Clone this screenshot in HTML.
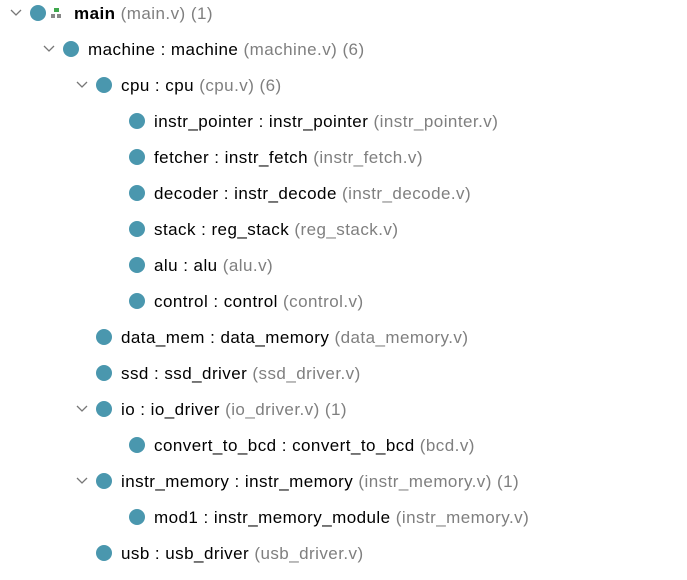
<!DOCTYPE html><html><head><style>
body{margin:0;width:687px;height:580px;background:#fff;font-family:"Liberation Sans",sans-serif;font-size:17px;letter-spacing:0.45px;color:#000;position:relative;overflow:hidden}
.r{position:absolute;height:20px;line-height:20px;white-space:nowrap;margin-top:1px}
.c{position:absolute;width:16px;height:16px;border-radius:50%;background:#4a97ae}
.g{color:#7f7f7f}
svg.ch{position:absolute}
</style></head><body>
<svg class="ch" style="left:10px;top:8px" width="12" height="10"><path d="M1 2 L6 7 L11 2" fill="none" stroke="#777" stroke-width="1.3"/></svg>
<div class="c" style="left:30px;top:5px"></div>
<div style="position:absolute;left:54px;top:8px;width:5px;height:4px;background:#3fa84d"></div>
<div style="position:absolute;left:51px;top:14px;width:4px;height:4px;background:#888"></div>
<div style="position:absolute;left:57px;top:14px;width:4px;height:4px;background:#888"></div>
<div class="r" style="left:74px;top:3px"><b>main</b> <span class="g">(main.v) (1)</span></div>

<svg class="ch" style="left:43px;top:44px" width="12" height="10"><path d="M1 2 L6 7 L11 2" fill="none" stroke="#777" stroke-width="1.3"/></svg>
<div class="c" style="left:63px;top:41px"></div>
<div class="r" style="left:88px;top:39px">machine : machine <span class="g">(machine.v) (6)</span></div>

<svg class="ch" style="left:76px;top:80px" width="12" height="10"><path d="M1 2 L6 7 L11 2" fill="none" stroke="#777" stroke-width="1.3"/></svg>
<div class="c" style="left:96px;top:77px"></div>
<div class="r" style="left:121px;top:75px">cpu : cpu <span class="g">(cpu.v) (6)</span></div>

<div class="c" style="left:129px;top:113px"></div>
<div class="r" style="left:154px;top:111px">instr_pointer : instr_pointer <span class="g">(instr_pointer.v)</span></div>
<div class="c" style="left:129px;top:149px"></div>
<div class="r" style="left:154px;top:147px">fetcher : instr_fetch <span class="g">(instr_fetch.v)</span></div>
<div class="c" style="left:129px;top:185px"></div>
<div class="r" style="left:154px;top:183px">decoder : instr_decode <span class="g">(instr_decode.v)</span></div>
<div class="c" style="left:129px;top:221px"></div>
<div class="r" style="left:154px;top:219px">stack : reg_stack <span class="g">(reg_stack.v)</span></div>
<div class="c" style="left:129px;top:257px"></div>
<div class="r" style="left:154px;top:255px">alu : alu <span class="g">(alu.v)</span></div>
<div class="c" style="left:129px;top:293px"></div>
<div class="r" style="left:154px;top:291px">control : control <span class="g">(control.v)</span></div>

<div class="c" style="left:96px;top:329px"></div>
<div class="r" style="left:121px;top:327px">data_mem : data_memory <span class="g">(data_memory.v)</span></div>
<div class="c" style="left:96px;top:365px"></div>
<div class="r" style="left:121px;top:363px">ssd : ssd_driver <span class="g">(ssd_driver.v)</span></div>

<svg class="ch" style="left:76px;top:404px" width="12" height="10"><path d="M1 2 L6 7 L11 2" fill="none" stroke="#777" stroke-width="1.3"/></svg>
<div class="c" style="left:96px;top:401px"></div>
<div class="r" style="left:121px;top:399px">io : io_driver <span class="g">(io_driver.v) (1)</span></div>
<div class="c" style="left:129px;top:437px"></div>
<div class="r" style="left:154px;top:435px">convert_to_bcd : convert_to_bcd <span class="g">(bcd.v)</span></div>

<svg class="ch" style="left:76px;top:476px" width="12" height="10"><path d="M1 2 L6 7 L11 2" fill="none" stroke="#777" stroke-width="1.3"/></svg>
<div class="c" style="left:96px;top:473px"></div>
<div class="r" style="left:121px;top:471px">instr_memory : instr_memory <span class="g">(instr_memory.v) (1)</span></div>
<div class="c" style="left:129px;top:509px"></div>
<div class="r" style="left:154px;top:507px">mod1 : instr_memory_module <span class="g">(instr_memory.v)</span></div>

<div class="c" style="left:96px;top:545px"></div>
<div class="r" style="left:121px;top:543px">usb : usb_driver <span class="g">(usb_driver.v)</span></div>
</body></html>
